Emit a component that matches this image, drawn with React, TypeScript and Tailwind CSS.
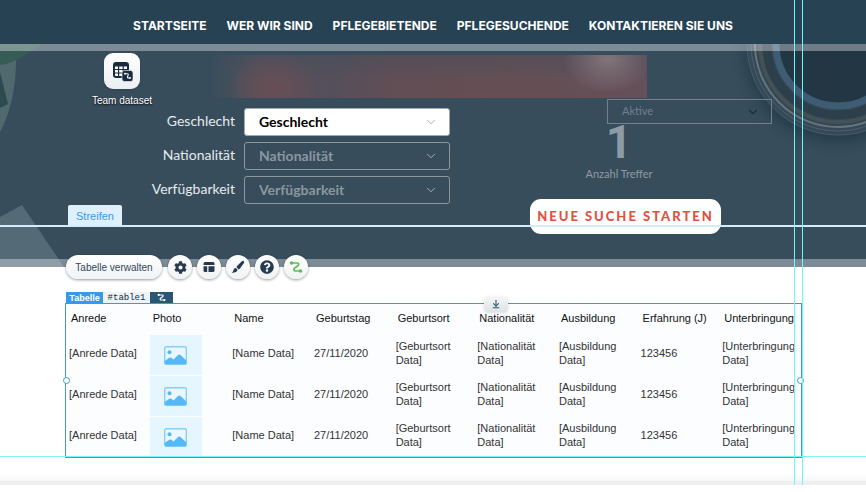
import React from 'react';
import { ArrowDownToLine, ChevronDown } from 'lucide-react';
import { FaCog, FaQuestionCircle } from 'react-icons/fa';

const navItems = ['STARTSEITE', 'WER WIR SIND', 'PFLEGEBIETENDE', 'PFLEGESUCHENDE', 'KONTAKTIEREN SIE UNS'];

const filters = [
  { id: 'geschlecht', label: 'Geschlecht', active: true },
  { id: 'nationalitaet', label: 'Nationalität', active: false },
  { id: 'verfuegbarkeit', label: 'Verfügbarkeit', active: false },
];

const columns = [
  { name: 'Anrede', value: '[Anrede Data]' },
  { name: 'Photo', value: 'photo' },
  { name: 'Name', value: '[Name Data]' },
  { name: 'Geburtstag', value: '27/11/2020' },
  { name: 'Geburtsort', value: '[Geburtsort Data]' },
  { name: 'Nationalität', value: '[Nationalität Data]' },
  { name: 'Ausbildung', value: '[Ausbildung Data]' },
  { name: 'Erfahrung (J)', value: '123456' },
  { name: 'Unterbringung', value: '[Unterbringung Data]' },
];

const rows = [1, 2, 3];

const DatasetIcon = () => (
  <svg width="22" height="22" viewBox="0 0 22 22" fill="none">
    <rect x="2" y="2" width="16" height="16" rx="3" fill="#1b2b3f" />
    <path
      d="M4 6.500h3v2.500H4zM8.200 6.500h3.400v2.500H8.200zM12.800 6.500H16v2.500h-3.200zM4 10h3v2.500H4zM8.200 10h3.400v2.500H8.200zM4 13.500h3V16H5a1 1 0 0 1-1-1zM8.200 13.500h3V16h-3z"
      fill="#fff"
    />
    <rect x="11" y="10.500" width="11" height="11" rx="2.500" fill="#1b2b3f" stroke="#f4f5f7" strokeWidth="0.600" />
    <path d="M13.700 13.700h2.500q1.300 0 1 1.200l-.6 1.600q-.4 1.500.9 1.500H19" stroke="#fff" strokeWidth="1.100" />
    <circle cx="14" cy="13.700" r="0.900" fill="#fff" />
    <circle cx="19" cy="18" r="0.900" fill="#fff" />
  </svg>
);

const ConnectIcon = ({ size, color }: { size: number; color: string }) => (
  <svg width={size} height={size} viewBox="0 0 14 14" fill="none">
    <path
      d="M3 3h5.200c1.700 0 2 1.500.9 2.500L5.600 8.200c-1.400 1.200-.8 2.800.9 2.800H11"
      stroke={color}
      strokeWidth="1.700"
    />
    <circle cx="2.600" cy="3" r="1.800" fill={color} />
    <circle cx="11.500" cy="11" r="1.800" fill={color} />
  </svg>
);

const LayoutIcon = () => (
  <svg width="12" height="12" viewBox="0 0 12 12" fill="#263a50">
    <path d="M2 1h8a1.500 1.500 0 0 1 1.500 1.500V4H.5V2.500A1.500 1.500 0 0 1 2 1zM.5 5.200h3.700V11H2A1.500 1.500 0 0 1 .5 9.500zM5.500 5.200h6v4.300A1.500 1.500 0 0 1 10 11H5.500z" />
  </svg>
);

const BrushIcon = () => (
  <svg width="14" height="14" viewBox="0 0 14 14" fill="#263a50">
    <path d="M12.800 1.200q.8.800.1 1.900L9 8.600Q8.200 9.600 7.200 8.900L6 7.700Q5.200 6.900 6 6l4.900-4.700q1.100-.9 1.900-.1z" />
    <path d="M4.900 8.100 6.600 9.800Q6.300 12.600.8 13q1.500-1.300 1.700-2.900.3-1.800 2.400-2z" />
  </svg>
);

const PhotoIcon = () => (
  <svg width="23" height="19" viewBox="0 0 23 19">
    <rect x="0.700" y="0.700" width="21.600" height="17.600" rx="1.500" fill="#eaf7ff" stroke="#86cffb" strokeWidth="1.400" />
    <circle cx="5.500" cy="6.300" r="2" fill="#56b9f7" />
    <path d="M.7 15 5.200 11.800q1.200-.8 2.300 0l2 1.700 4.500-4.400q1.300-1.200 2.600 0l5.700 5.400v2.300q0 1.500-1.500 1.500H2.200q-1.500 0-1.500-1.500z" fill="#56b9f7" />
  </svg>
);

// desk scene behind the search form: plant and plate on the left, coffee cup on the right
const Backdrop = () => (
  <>
    <svg className="absolute left-0 top-0" width="70" height="223" viewBox="0 0 70 223">
      <path d="M0 0h16v20Q15 60 0 88z" fill="#50696f" />
      <path d="M0 28l8 32-8 4z" fill="#2d4a50" />
      <path d="M0 0h43L26 10Q12 20 0 21z" fill="#375c56" />
      <path d="M0 173l22-12 42 62H0z" fill="#556a77" />
    </svg>
    <svg className="absolute right-0 top-0" width="146" height="120" viewBox="0 0 146 120">
      <defs>
        <radialGradient id="cupShadow" cx="118" cy="4" r="112" gradientUnits="userSpaceOnUse">
          <stop offset="0.780" stopColor="#263d4d" />
          <stop offset="1" stopColor="#374d5c" stopOpacity="0" />
        </radialGradient>
      </defs>
      <circle cx="118" cy="4" r="112" fill="url(#cupShadow)" />
      <circle cx="118" cy="0" r="91" fill="#34495a" stroke="#4a5c68" strokeWidth="1" />
      <circle cx="118" cy="0" r="87" fill="none" stroke="#4f606b" strokeWidth="1" />
      <circle cx="118" cy="0" r="83" fill="#34464f" stroke="#66747b" strokeWidth="2" />
      <circle cx="118" cy="0" r="78" fill="none" stroke="#435159" strokeWidth="4" />
      <circle cx="118" cy="0" r="71" fill="none" stroke="#2c3f4b" strokeWidth="8" />
      <circle cx="118" cy="0" r="62" fill="#233644" stroke="#3f5c75" strokeWidth="7" />
    </svg>
  </>
);

const CircleButton = ({ label, children }: { label: string; children: React.ReactNode }) => (
  <button
    aria-label={label}
    className="flex size-6 items-center justify-center rounded-full bg-gradient-to-b from-white to-[#f1f2f4] text-[#263a50] shadow-[0_1px_3px_rgba(0,0,0,0.4)]"
  >
    {children}
  </button>
);

const SearchStrip = () => (
  <section className="relative bg-[#374d5c]">
    <Backdrop />
    <div className="relative h-[7px] bg-white/35" />

    <div className="relative flex h-14 items-start pl-[92px]">
      <div className="flex w-[60px] shrink-0 flex-col items-center pt-[2px]">
        <div className="flex size-9 items-center justify-center rounded-[9px] bg-gradient-to-b from-white to-[#eceef2] shadow">
          <DatasetIcon />
        </div>
        <span className="mt-1 whitespace-nowrap text-[10px] leading-4 text-white [text-shadow:0_1px_2px_#000]">
          Team dataset
        </span>
      </div>
      <div className="ml-[58px] mr-[219px] mt-1 h-[43px] grow bg-[radial-gradient(44px_34px_at_91%_10%,#82747a,transparent),radial-gradient(44px_34px_at_15%_75%,#684e54,transparent),linear-gradient(to_bottom,#374d5c55,transparent_60%),linear-gradient(to_right,transparent,#57505b_10%,#554f5b_28%,#624e55_42%,#654f54_70%,#65505a)]" />
    </div>

    <div className="relative flex items-start justify-between">
      <form className="grid grid-cols-[235px_206px] items-center gap-x-[9px] gap-y-[6px] pt-px font-[Lato,sans-serif]">
        {filters.map((f) => (
          <React.Fragment key={f.id}>
            <label htmlFor={f.id} className="pb-[3px] text-right text-sm text-[#e6eaed]">
              {f.label}
            </label>
            <div className="relative">
              <select
                id={f.id}
                className={
                  f.active
                    ? 'block h-7 w-full appearance-none rounded-[3px] border border-[#a3abb0] bg-white pl-[14px] text-sm font-bold text-black'
                    : 'block h-7 w-full appearance-none rounded-[3px] border border-[#8c979e] bg-transparent pl-[14px] text-sm font-bold text-[#8b979f]'
                }
              >
                <option>{f.label}</option>
              </select>
              <ChevronDown
                size={14}
                strokeWidth={1.5}
                className={
                  f.active
                    ? 'pointer-events-none absolute right-3 top-[7px] text-[#9aa0a5]'
                    : 'pointer-events-none absolute right-3 top-[7px] text-[#b4bcc1]'
                }
              />
            </div>
          </React.Fragment>
        ))}
      </form>

      <div className="-mt-2 mr-[94px] flex w-[242px] flex-col font-[Lato,sans-serif]">
        <div className="relative ml-auto w-[165px]">
          <select
            aria-label="Status"
            className="block h-[25px] w-full appearance-none border border-[#71808c] bg-transparent pl-[14px] text-[11px] text-[#71808c]"
          >
            <option>Aktive</option>
          </select>
          <ChevronDown size={14} strokeWidth={2} className="pointer-events-none absolute right-3 top-[6px] text-[#1c2f3e]" />
        </div>
        <div className="flex w-[178px] flex-col items-center self-start text-[#8d9ba4]">
          <span className="font-[Roboto,sans-serif] text-[46px] font-bold leading-9">1</span>
          <span className="pt-1 text-[11px] leading-5">Anzahl Treffer</span>
        </div>
        <button className="mt-[15px] h-[35px] w-[191px] whitespace-nowrap rounded-[11px] bg-white text-[13px] font-black tracking-[2px] text-[#e2513f]">
          NEUE SUCHE STARTEN
        </button>
      </div>
    </div>

    <div className="relative mt-[25px] h-2 bg-white/35" />

    <div className="absolute bottom-10 left-0 w-full border-b-2 border-[#d3ebfa] pl-[68px]">
      <span className="block h-5 w-[54px] rounded-t-[2px] bg-[#dff0fd] text-center text-[11px] leading-[22px] text-[#3899ec]">
        Streifen
      </span>
    </div>
  </section>
);

const TableToolbar = () => (
  <div className="relative -mt-3 ml-[66px] flex items-center gap-[5px]">
    <button className="mr-px h-6 w-24 whitespace-nowrap rounded-full bg-gradient-to-b from-white to-[#f1f2f4] text-[10px] text-[#32475c] shadow-[0_1px_3px_rgba(0,0,0,0.4)]">
      Tabelle verwalten
    </button>
    <CircleButton label="Einstellungen">
      <FaCog size={13} />
    </CircleButton>
    <CircleButton label="Layout">
      <LayoutIcon />
    </CircleButton>
    <CircleButton label="Design">
      <BrushIcon />
    </CircleButton>
    <CircleButton label="Hilfe">
      <FaQuestionCircle size={14} />
    </CircleButton>
    <CircleButton label="Daten verbinden">
      <ConnectIcon size={14} color="#60bc57" />
    </CircleButton>
  </div>
);

const DataTable = () => (
  <div className="ml-[65px] mr-16 mt-[13px]">
    <div className="ml-px flex h-[11px] text-[9px] leading-[12px]">
      <span className="w-[37px] bg-[#3899ec] text-center font-bold text-white">Tabelle</span>
      <span className="w-[47px] bg-[#eef3f8] text-center font-['Liberation_Mono',monospace] text-[#162d3d]">#table1</span>
      <span className="flex w-[23px] items-center justify-center bg-[#2b5672]">
        <ConnectIcon size={9} color="#fff" />
      </span>
    </div>
    <div className="relative border border-[#4595dd] bg-[#fcfdff]">
      <table className="w-full table-fixed border-collapse text-left text-[11px] leading-[14px]">
        <thead>
          <tr className="h-[30px]">
            {columns.map((c) => (
              <th key={c.name} className="whitespace-nowrap p-0 pb-[3px] pl-[5px] font-normal text-[#111]">
                {c.name}
              </th>
            ))}
          </tr>
        </thead>
        <tbody>
          {rows.map((row) => (
            <tr key={row} className="h-[41px]">
              {columns.map((c) =>
                c.value === 'photo' ? (
                  <td key={c.name} className="p-0 pl-[2px]">
                    <div className="flex h-10 w-[52px] items-center justify-center bg-[#e6f6ff] pt-[2px]">
                      <PhotoIcon />
                    </div>
                  </td>
                ) : (
                  <td key={c.name} className="p-0 pb-[3px] pl-[3px] text-[#333]">
                    {c.value}
                  </td>
                )
              )}
            </tr>
          ))}
        </tbody>
      </table>
      <button
        aria-label="Ausdehnen"
        className="absolute -top-2 left-[418px] flex h-4 w-6 items-center justify-center rounded bg-gradient-to-b from-[#f5f6f7] to-[#dfe3e6] text-[#32536a] shadow"
      >
        <ArrowDownToLine size={10} strokeWidth={2.5} />
      </button>
      <span className="absolute -left-[3px] top-[73px] size-[7px] rounded-full border border-[#3899ec] bg-white" />
      <span className="absolute -right-[3px] top-[73px] size-[7px] rounded-full border border-[#3899ec] bg-white" />
    </div>
  </div>
);

const App: React.FC = () => {
  return (
    <div className="relative min-h-screen bg-white font-['Liberation_Sans',Arial,sans-serif]">
      <header className="flex h-11 items-center justify-center bg-[#264253] pt-2">
        <nav className="flex gap-5 font-[Inter,sans-serif] text-xs font-bold text-white">
          {navItems.map((item) => (
            <a key={item} href="#" className="whitespace-nowrap">
              {item}
            </a>
          ))}
        </nav>
      </header>
      <SearchStrip />
      <main className="relative">
        <TableToolbar />
        <DataTable />
        <div className="absolute bottom-px left-0 h-px w-full bg-[#7df3f5]" />
      </main>
      <footer className="mt-4 h-[11px] border-b-4 border-[#efefef] bg-gradient-to-b from-white to-[#f6f6f6]" />

      {/* layout guides */}
      <div className="pointer-events-none absolute right-[63px] top-0 h-[485px] w-[9px] border-x border-[#6ff5fa]" />
    </div>
  );
};

export default App;
